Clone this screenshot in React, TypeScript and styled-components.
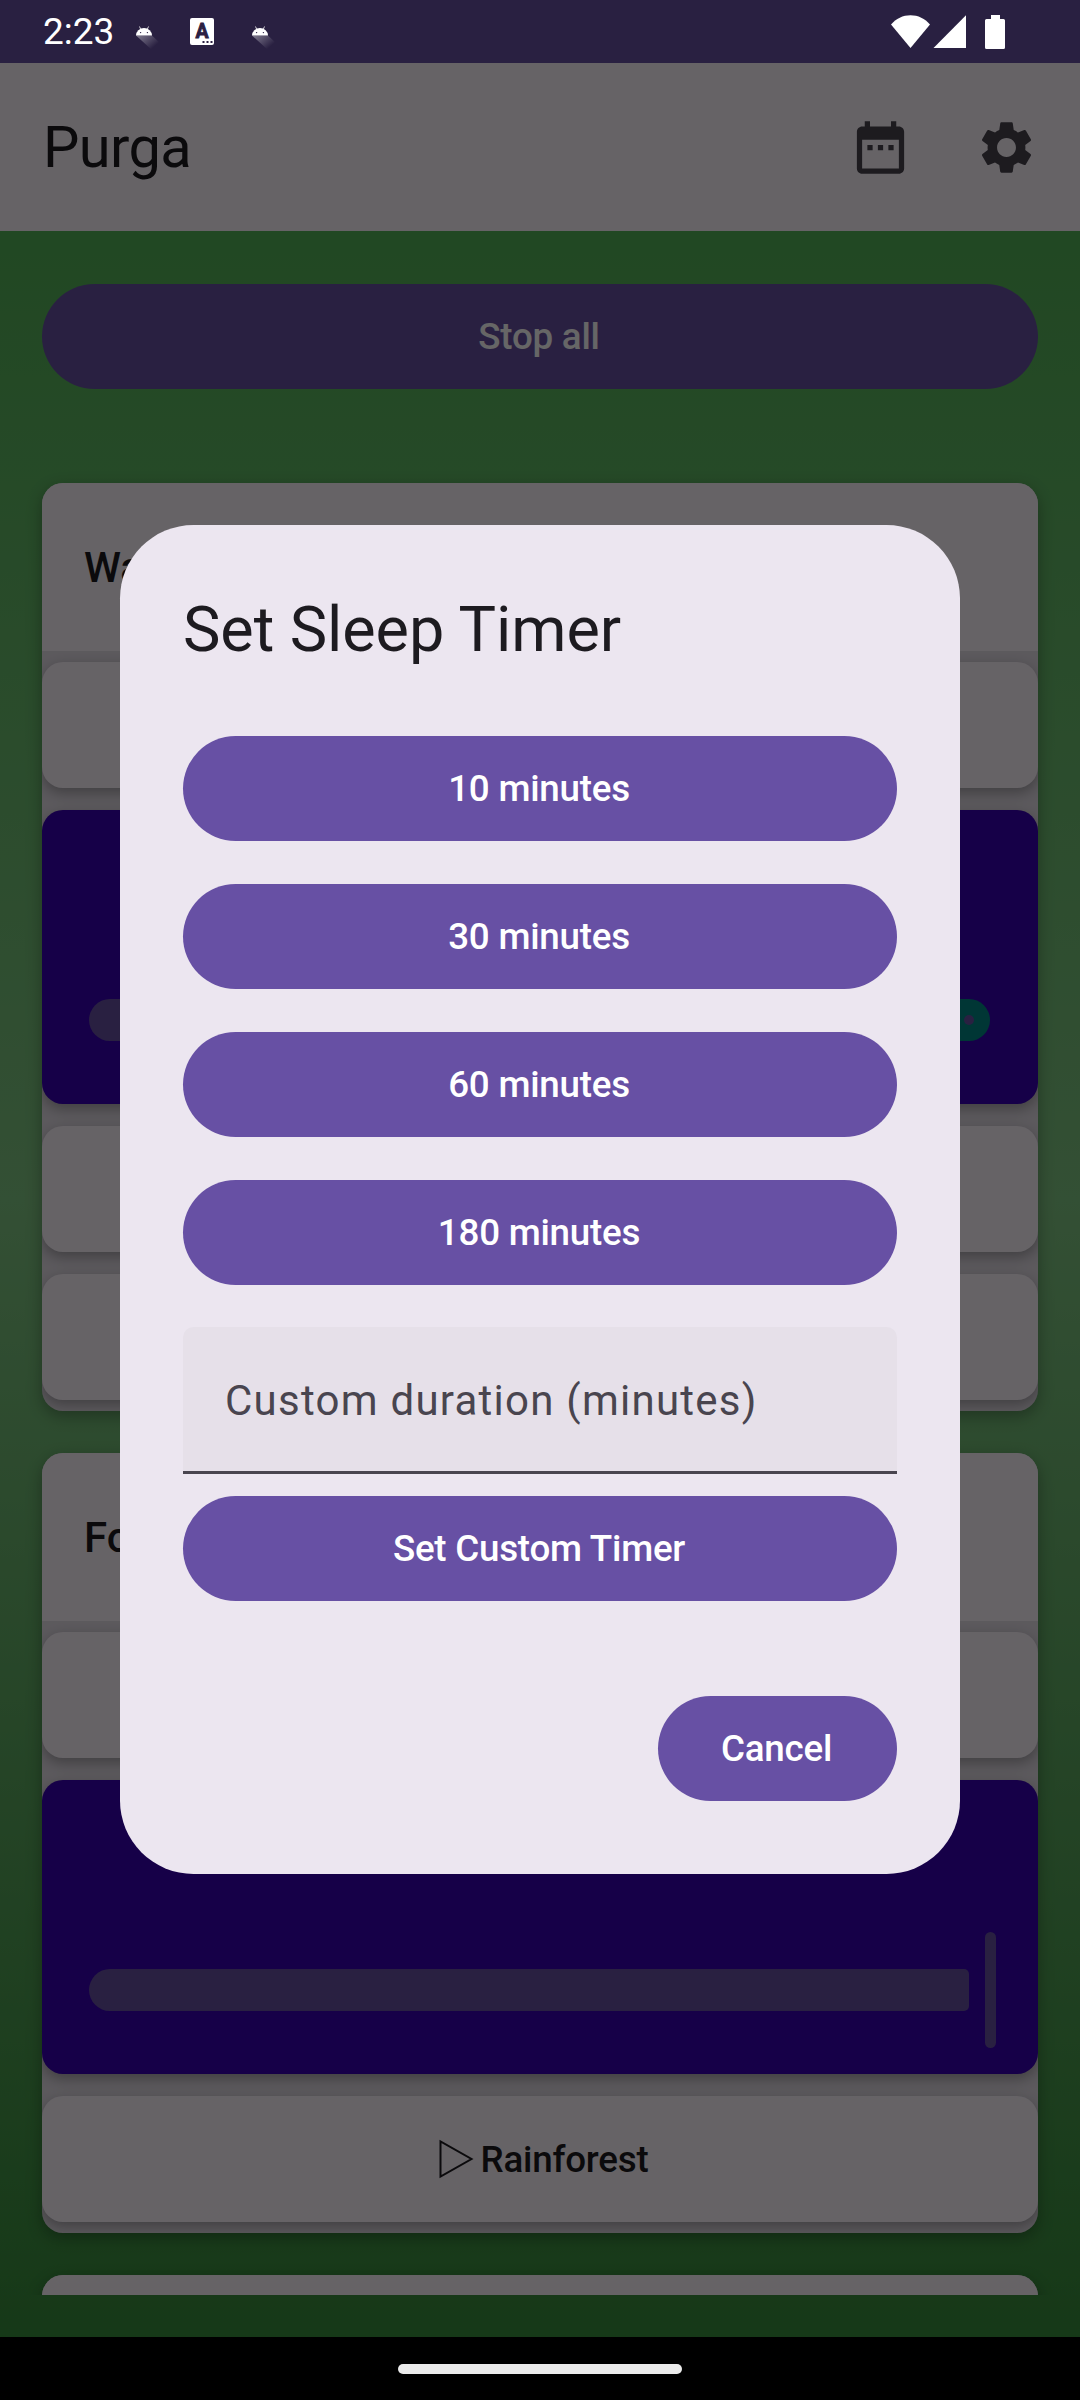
import React from "react";
import styled, { createGlobalStyle } from "styled-components";

const GlobalStyle = createGlobalStyle`
  *, *::before, *::after { box-sizing: border-box; }
  html, body { margin: 0; padding: 0; background: #000; }
  body { font-family: Roboto, "Noto Sans", sans-serif; }
  button { border: 0; margin: 0; padding: 0; font: inherit; }
`;

const Screen = styled.div`
  position: relative;
  display: flex;
  flex-direction: column;
  width: 1080px;
  height: 2400px;
  overflow: hidden;
`;

const StatusBar = styled.header`
  display: flex;
  align-items: center;
  justify-content: space-between;
  height: 63px;
  flex: none;
  padding: 0 75px 0 43px;
  background: #6750a4;
`;

const StatusContent = styled.div`
  display: flex;
  align-items: center;
  height: 63px;
  position: relative;
  z-index: 2;
`;

const Clock = styled.span`
  width: 92px;
  color: #fff;
  font-size: 37px;
  line-height: 63px;
`;

const AppBar = styled.div`
  display: flex;
  align-items: center;
  justify-content: space-between;
  height: 168px;
  flex: none;
  padding: 0 42px 0 43px;
  background: #fef7ff;
  color: #1d1b20;
`;

const AppTitle = styled.h1`
  margin: 0;
  font-size: 57.75px;
  font-weight: 400;
  line-height: 74px;
  letter-spacing: -0.6px;
`;

const Actions = styled.div`
  display: flex;
  gap: 63px;
  color: #49454f;
`;

const Content = styled.main`
  flex: 1;
  min-height: 0;
  padding: 53px 42px 42px;
  background: linear-gradient(to bottom, #53b357 0%, #81c784 46%, #388e3c 100%);
`;

const Scroll = styled.div`
  display: flex;
  flex-direction: column;
  height: 2011px;
  margin: 0 -42px;
  padding: 0 42px;
  overflow: hidden;
`;

const PillButton = styled.button<{ $width?: string; $gap?: number }>`
  display: flex;
  align-items: center;
  justify-content: center;
  flex: none;
  width: ${(p) => p.$width ?? "100%"};
  height: 105px;
  margin-bottom: ${(p) => p.$gap ?? 0}px;
  padding-right: 2px;
  border-radius: 53px;
  background: #6750a4;
  color: #fff;
  font-size: 36.75px;
  font-weight: 500;
  letter-spacing: -0.24px;
  line-height: 52px;
`;

const Card = styled.section`
  display: flex;
  flex-direction: column;
  flex: none;
  margin-bottom: 42px;
  border-radius: 21px;
  overflow: hidden;
  background: #e6e0e9;
  box-shadow: 0 5px 16px rgba(0, 0, 0, 0.3);
`;

const CardHeader = styled.h2`
  height: 168px;
  margin: 0;
  padding: 1px 42px 0;
  background: #fef7ff;
  color: #1d1b20;
  font-size: 42px;
  font-weight: 500;
  line-height: 167px;
`;

const Sound = styled.div<{ $playing?: boolean }>`
  display: flex;
  align-items: ${(p) => (p.$playing ? "flex-end" : "center")};
  justify-content: center;
  height: ${(p) => (p.$playing ? 294 : 126)}px;
  margin: 11px 0;
  padding: ${(p) => (p.$playing ? "0 42px 26px 47px" : "0")};
  border-radius: 21px;
  background: ${(p) => (p.$playing ? "#3700b3" : "#fef7ff")};
  box-shadow: 0 5px 14px rgba(0, 0, 0, 0.3);
  color: #1d1b20;
  font-size: 36.75px;
  font-weight: 500;
  letter-spacing: -0.2px;
`;

const Slider = styled.div`
  display: flex;
  align-items: center;
  width: 100%;
  height: 116px;
`;

const Active = styled.span<{ $width: number }>`
  flex: none;
  width: ${(p) => p.$width}px;
  height: 42px;
  border-radius: 21px 5px 5px 21px;
  background: #6750a4;
`;

const Thumb = styled.span`
  flex: none;
  width: 11px;
  height: 116px;
  margin: 0 16px;
  border-radius: 6px;
  background: #6750a4;
`;

const Inactive = styled.span`
  display: flex;
  flex: none;
  align-items: center;
  justify-content: flex-end;
  width: 460px;
  height: 42px;
  padding-right: 16px;
  border-radius: 5px 21px 21px 5px;
  background: #018786;
`;

const StopDot = styled.span`
  width: 10px;
  height: 10px;
  border-radius: 50%;
  background: #6750a4;
`;

const NavBar = styled.footer`
  display: flex;
  align-items: center;
  justify-content: center;
  flex: none;
  height: 63px;
  background: #000;
`;

const Handle = styled.span`
  position: relative;
  z-index: 2;
  width: 284px;
  height: 10px;
  border-radius: 5px;
  background: #ebebeb;
`;

const Scrim = styled.div`
  position: absolute;
  inset: 0;
  z-index: 1;
  display: flex;
  align-items: center;
  justify-content: center;
  padding-bottom: 1px;
  background: rgba(0, 0, 0, 0.6);
`;

const Dialog = styled.div`
  display: flex;
  flex-direction: column;
  width: 840px;
  height: 1349px;
  padding: 63px;
  border-radius: 73.5px;
  background: #ece6f0;
`;

const DialogTitle = styled.h2`
  margin: 0 0 64px;
  color: #1d1b20;
  font-size: 63px;
  font-weight: 400;
  line-height: 84px;
  letter-spacing: -0.08px;
`;

const Field = styled.label`
  display: flex;
  align-items: center;
  flex: none;
  height: 147px;
  margin: -1px 0 22px;
  padding: 3px 42px 0;
  border-bottom: 3px solid #49454f;
  border-radius: 10.5px 10.5px 0 0;
  background: #e6e0e9;
  color: #49454f;
  font-size: 42px;
  letter-spacing: 1.25px;
`;

const DialogActions = styled.div`
  display: flex;
  justify-content: flex-end;
  margin-top: 95px;
`;

const IconLetter = styled.text`
  font-size: 19.5px;
  font-weight: 700;
  text-anchor: middle;
  fill: #2b2042;
  stroke: #2b2042;
  stroke-width: 0.8px;
`;

const Keyboard = styled.svg`
  margin: 0 37px 0 25px;
`;

const AndroidIcon = ({ id }: { id: string }) => (
  <svg width="30" height="36" viewBox="0 0 30 36">
    <defs>
      <linearGradient id={id} gradientUnits="userSpaceOnUse" x1="8" y1="18" x2="20" y2="32">
        <stop offset="0" stopColor="#fff" stopOpacity="0.38" />
        <stop offset="1" stopColor="#fff" stopOpacity="0" />
      </linearGradient>
    </defs>
    <path d="M1 21.500H17L27 31 17 36Z" fill={`url(#${id})`} />
    <path d="M1 21.500a8 7.500 0 0 1 16 0Z" fill="#fff" />
    <path d="M4.500 12.500 5.800 15.500M13.500 12.500 12.200 15.500" stroke="#fff" strokeWidth="0.8" />
    <circle cx="5.600" cy="18.600" r="0.7" fill="#2b2042" />
    <circle cx="12.400" cy="18.600" r="0.7" fill="#2b2042" />
  </svg>
);

const KeyboardIcon = () => (
  <Keyboard width="24" height="27" viewBox="0 0 24 27">
    <rect width="24" height="27" rx="2" fill="#fff" />
    <IconLetter x="12" y="20">
      A
    </IconLetter>
    <path d="M12.500 23h2v2h-2zM16.500 23h2v2h-2zM20.500 23h2v2h-2z" fill="#2b2042" />
  </Keyboard>
);

const SystemIcons = () => (
  <svg width="114" height="34" viewBox="0 0 114 34" fill="#fff">
    <path d="M0 9.500C5 3.500 12 .2 19.500 .2S34 3.500 39 9.500L19.500 33Z" />
    <path d="M42.500 33 75 .3V33Z" />
    <path d="M100 0h9v4h3.500q1.500 0 1.500 1.500v27q0 1.500-1.500 1.500h-17q-1.500 0-1.500-1.500v-27q0-1.500 1.500-1.500h4.500Z" />
  </svg>
);

const DateRangeIcon = () => (
  <svg width="63" height="63" viewBox="0 0 24 24" fill="currentColor">
    <path d="M9 11H7v2h2v-2zm4 0h-2v2h2v-2zm4 0h-2v2h2v-2zm2-7h-1V2h-2v2H8V2H6v2H5c-1.110 0-1.990.9-1.990 2L3 20c0 1.100.890 2 2 2h14c1.100 0 2-.9 2-2V6c0-1.100-.9-2-2-2zm0 16H5V9h14v11z" />
  </svg>
);

const SettingsIcon = () => (
  <svg width="63" height="63" viewBox="0 0 24 24" fill="currentColor">
    <path d="M19.140 12.940c.040-.3.060-.610.060-.940 0-.320-.020-.640-.070-.940l2.030-1.580c.180-.140.230-.410.120-.610l-1.920-3.320c-.120-.220-.370-.290-.590-.220l-2.390.960c-.5-.380-1.030-.7-1.620-.940l-.360-2.540c-.040-.240-.240-.410-.480-.410h-3.840c-.240 0-.430.170-.470.410l-.360 2.540c-.590.240-1.130.570-1.620.940l-2.390-.960c-.220-.080-.470 0-.590.220L2.740 8.870c-.120.210-.080.470.120.610l2.030 1.580c-.050.3-.090.630-.090.940s.020.640.070.940l-2.030 1.580c-.180.140-.230.410-.120.610l1.920 3.320c.120.220.370.290.590.220l2.390-.960c.5.380 1.030.7 1.620.940l.360 2.540c.050.240.240.410.480.410h3.840c.240 0 .440-.170.470-.410l.360-2.540c.590-.240 1.130-.560 1.620-.940l2.390.960c.220.080.470 0 .590-.220l1.920-3.320c.120-.220.070-.470-.120-.610l-2.010-1.580zM12 15.600c-1.980 0-3.600-1.620-3.600-3.600s1.620-3.600 3.600-3.600 3.600 1.620 3.600 3.600-1.620 3.600-3.600 3.600z" />
  </svg>
);

const PlayIcon = () => (
  <svg width="49" height="42" viewBox="0 0 49 42" fill="none">
    <path d="M9.500 3.500V38.500L40.500 21Z" stroke="currentColor" strokeWidth="2" />
  </svg>
);

const presets = [10, 30, 60, 180];

export default function App() {
  return (
    <>
      <GlobalStyle />
      <Screen>
        <StatusBar>
          <StatusContent>
            <Clock>2:23</Clock>
            <AndroidIcon id="shade-a" />
            <KeyboardIcon />
            <AndroidIcon id="shade-b" />
          </StatusContent>
          <StatusContent>
            <SystemIcons />
          </StatusContent>
        </StatusBar>
        <AppBar>
          <AppTitle>Purga</AppTitle>
          <Actions>
            <DateRangeIcon />
            <SettingsIcon />
          </Actions>
        </AppBar>
        <Content>
          <Scroll>
            <PillButton $gap={94}>Stop all</PillButton>
            <Card>
              <CardHeader>Water</CardHeader>
              <Sound />
              <Sound $playing>
                <Slider>
                  <Active $width={398} />
                  <Thumb />
                  <Inactive>
                    <StopDot />
                  </Inactive>
                </Slider>
              </Sound>
              <Sound />
              <Sound />
            </Card>
            <Card>
              <CardHeader>Forest</CardHeader>
              <Sound />
              <Sound $playing>
                <Slider>
                  <Active $width={880} />
                  <Thumb />
                </Slider>
              </Sound>
              <Sound>
                <PlayIcon />
                Rainforest
              </Sound>
            </Card>
            <Card>
              <CardHeader />
            </Card>
          </Scroll>
        </Content>
        <NavBar>
          <Handle />
        </NavBar>
        <Scrim>
          <Dialog role="dialog">
            <DialogTitle>Set Sleep Timer</DialogTitle>
            {presets.map((m) => (
              <PillButton key={m} $gap={43}>
                {m} minutes
              </PillButton>
            ))}
            <Field>Custom duration (minutes)</Field>
            <PillButton>Set Custom Timer</PillButton>
            <DialogActions>
              <PillButton $width="239px">Cancel</PillButton>
            </DialogActions>
          </Dialog>
        </Scrim>
      </Screen>
    </>
  );
}
